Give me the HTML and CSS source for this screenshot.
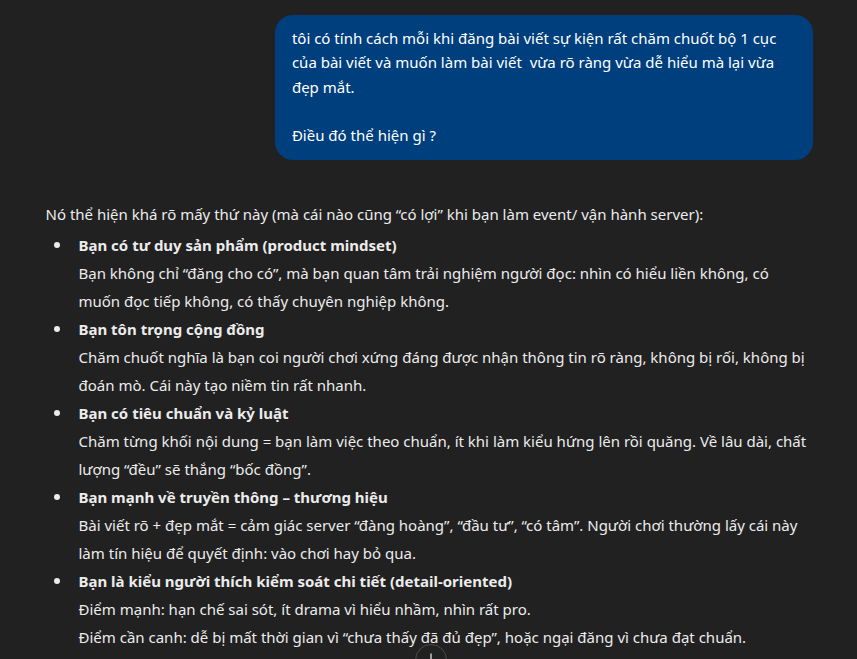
FILE: index.html
```html
<!DOCTYPE html>
<html lang="vi">
<head>
  <meta charset="UTF-8">
  <meta name="viewport" content="width=device-width, initial-scale=1.0">
  <title>Trò chuyện</title>
  <link rel="stylesheet" href="styles.css">
</head>
<body>
  <div class="thread">
    <div class="msg-user">
      <div class="bubble">
        tôi có tính cách mỗi khi đăng bài viết sự kiện rất chăm chuốt bộ 1 cục của bài viết và muốn làm bài viết&nbsp; vừa rõ ràng vừa dễ hiểu mà lại vừa đẹp mắt.<br>
        <br>
        Điều đó thể hiện gì ?
      </div>
    </div>

    <div class="msg-bot">
      <p>Nó thể hiện khá rõ mấy thứ này (mà cái nào cũng “có lợi” khi bạn làm event/ vận hành server):</p>
      <ul>
        <li><strong>Bạn có tư duy sản phẩm (product mindset)</strong><br>
          Bạn không chỉ “đăng cho có”, mà bạn quan tâm trải nghiệm người đọc: nhìn có hiểu liền không, có muốn đọc tiếp không, có thấy chuyên nghiệp không.</li>
        <li><strong>Bạn tôn trọng cộng đồng</strong><br>
          Chăm chuốt nghĩa là bạn coi người chơi xứng đáng được nhận thông tin rõ ràng, không bị rối, không bị đoán mò. Cái này tạo niềm tin rất nhanh.</li>
        <li><strong>Bạn có tiêu chuẩn và kỷ luật</strong><br>
          Chăm từng khối nội dung = bạn làm việc theo chuẩn, ít khi làm kiểu hứng lên rồi quăng. Về lâu dài, chất lượng “đều” sẽ thắng “bốc đồng”.</li>
        <li><strong>Bạn mạnh về truyền thông – thương hiệu</strong><br>
          Bài viết rõ + đẹp mắt = cảm giác server “đàng hoàng”, “đầu tư”, “có tâm”. Người chơi thường lấy cái này làm tín hiệu để quyết định: vào chơi hay bỏ qua.</li>
        <li><strong>Bạn là kiểu người thích kiểm soát chi tiết (detail-oriented)</strong><br>
          Điểm mạnh: hạn chế sai sót, ít drama vì hiểu nhầm, nhìn rất pro.<br>
          Điểm cần canh: dễ bị mất thời gian vì “chưa thấy đã đủ đẹp”, hoặc ngại đăng vì chưa đạt chuẩn.</li>
      </ul>
    </div>
  </div>

  <button class="scroll-down" title="Cuộn xuống">
    <svg width="16" height="16" viewBox="0 0 16 16" fill="none" stroke="#d0d0d0" stroke-width="1.4" stroke-linecap="round" stroke-linejoin="round">
      <path d="M8 2v12M3.5 9.5 8 14l4.5-4.5"/>
    </svg>
  </button>
</body>
</html>
```

FILE: styles.css
```css
body { margin: 0; background: #212121; color: #ececec; font-family: 'Noto Sans', 'Open Sans', sans-serif; font-size: 15px; overflow: hidden; height: 659px; }
.thread { max-width: 768px; margin: 0 auto; padding-top: 15px; }
.msg-user { display: flex; justify-content: flex-end; }
.bubble { max-width: 70%; box-sizing: border-box; background: #003f7d; color: #fff; border-radius: 18px; padding: 11px 16px 13px 17px; line-height: 24.3px; }
.msg-bot { margin-top: 40px; line-height: 28px; padding-left: 1px; }
.msg-bot p { margin: 0 0 3px; }
.msg-bot ul { margin: 0; padding-left: 33px; list-style: none; }
.msg-bot li { position: relative; }
.msg-bot li::before { content: ''; position: absolute; left: -25px; top: 11px; width: 6px; height: 6px; border-radius: 50%; background: #ececec; }
.msg-bot strong { font-weight: 700; }
.scroll-down { position: absolute; left: 415px; top: 644px; width: 32px; height: 32px; border-radius: 50%; border: 1px solid #4a4a4a; background: #212121; padding: 0; display: flex; align-items: center; justify-content: center; cursor: pointer; }
```
